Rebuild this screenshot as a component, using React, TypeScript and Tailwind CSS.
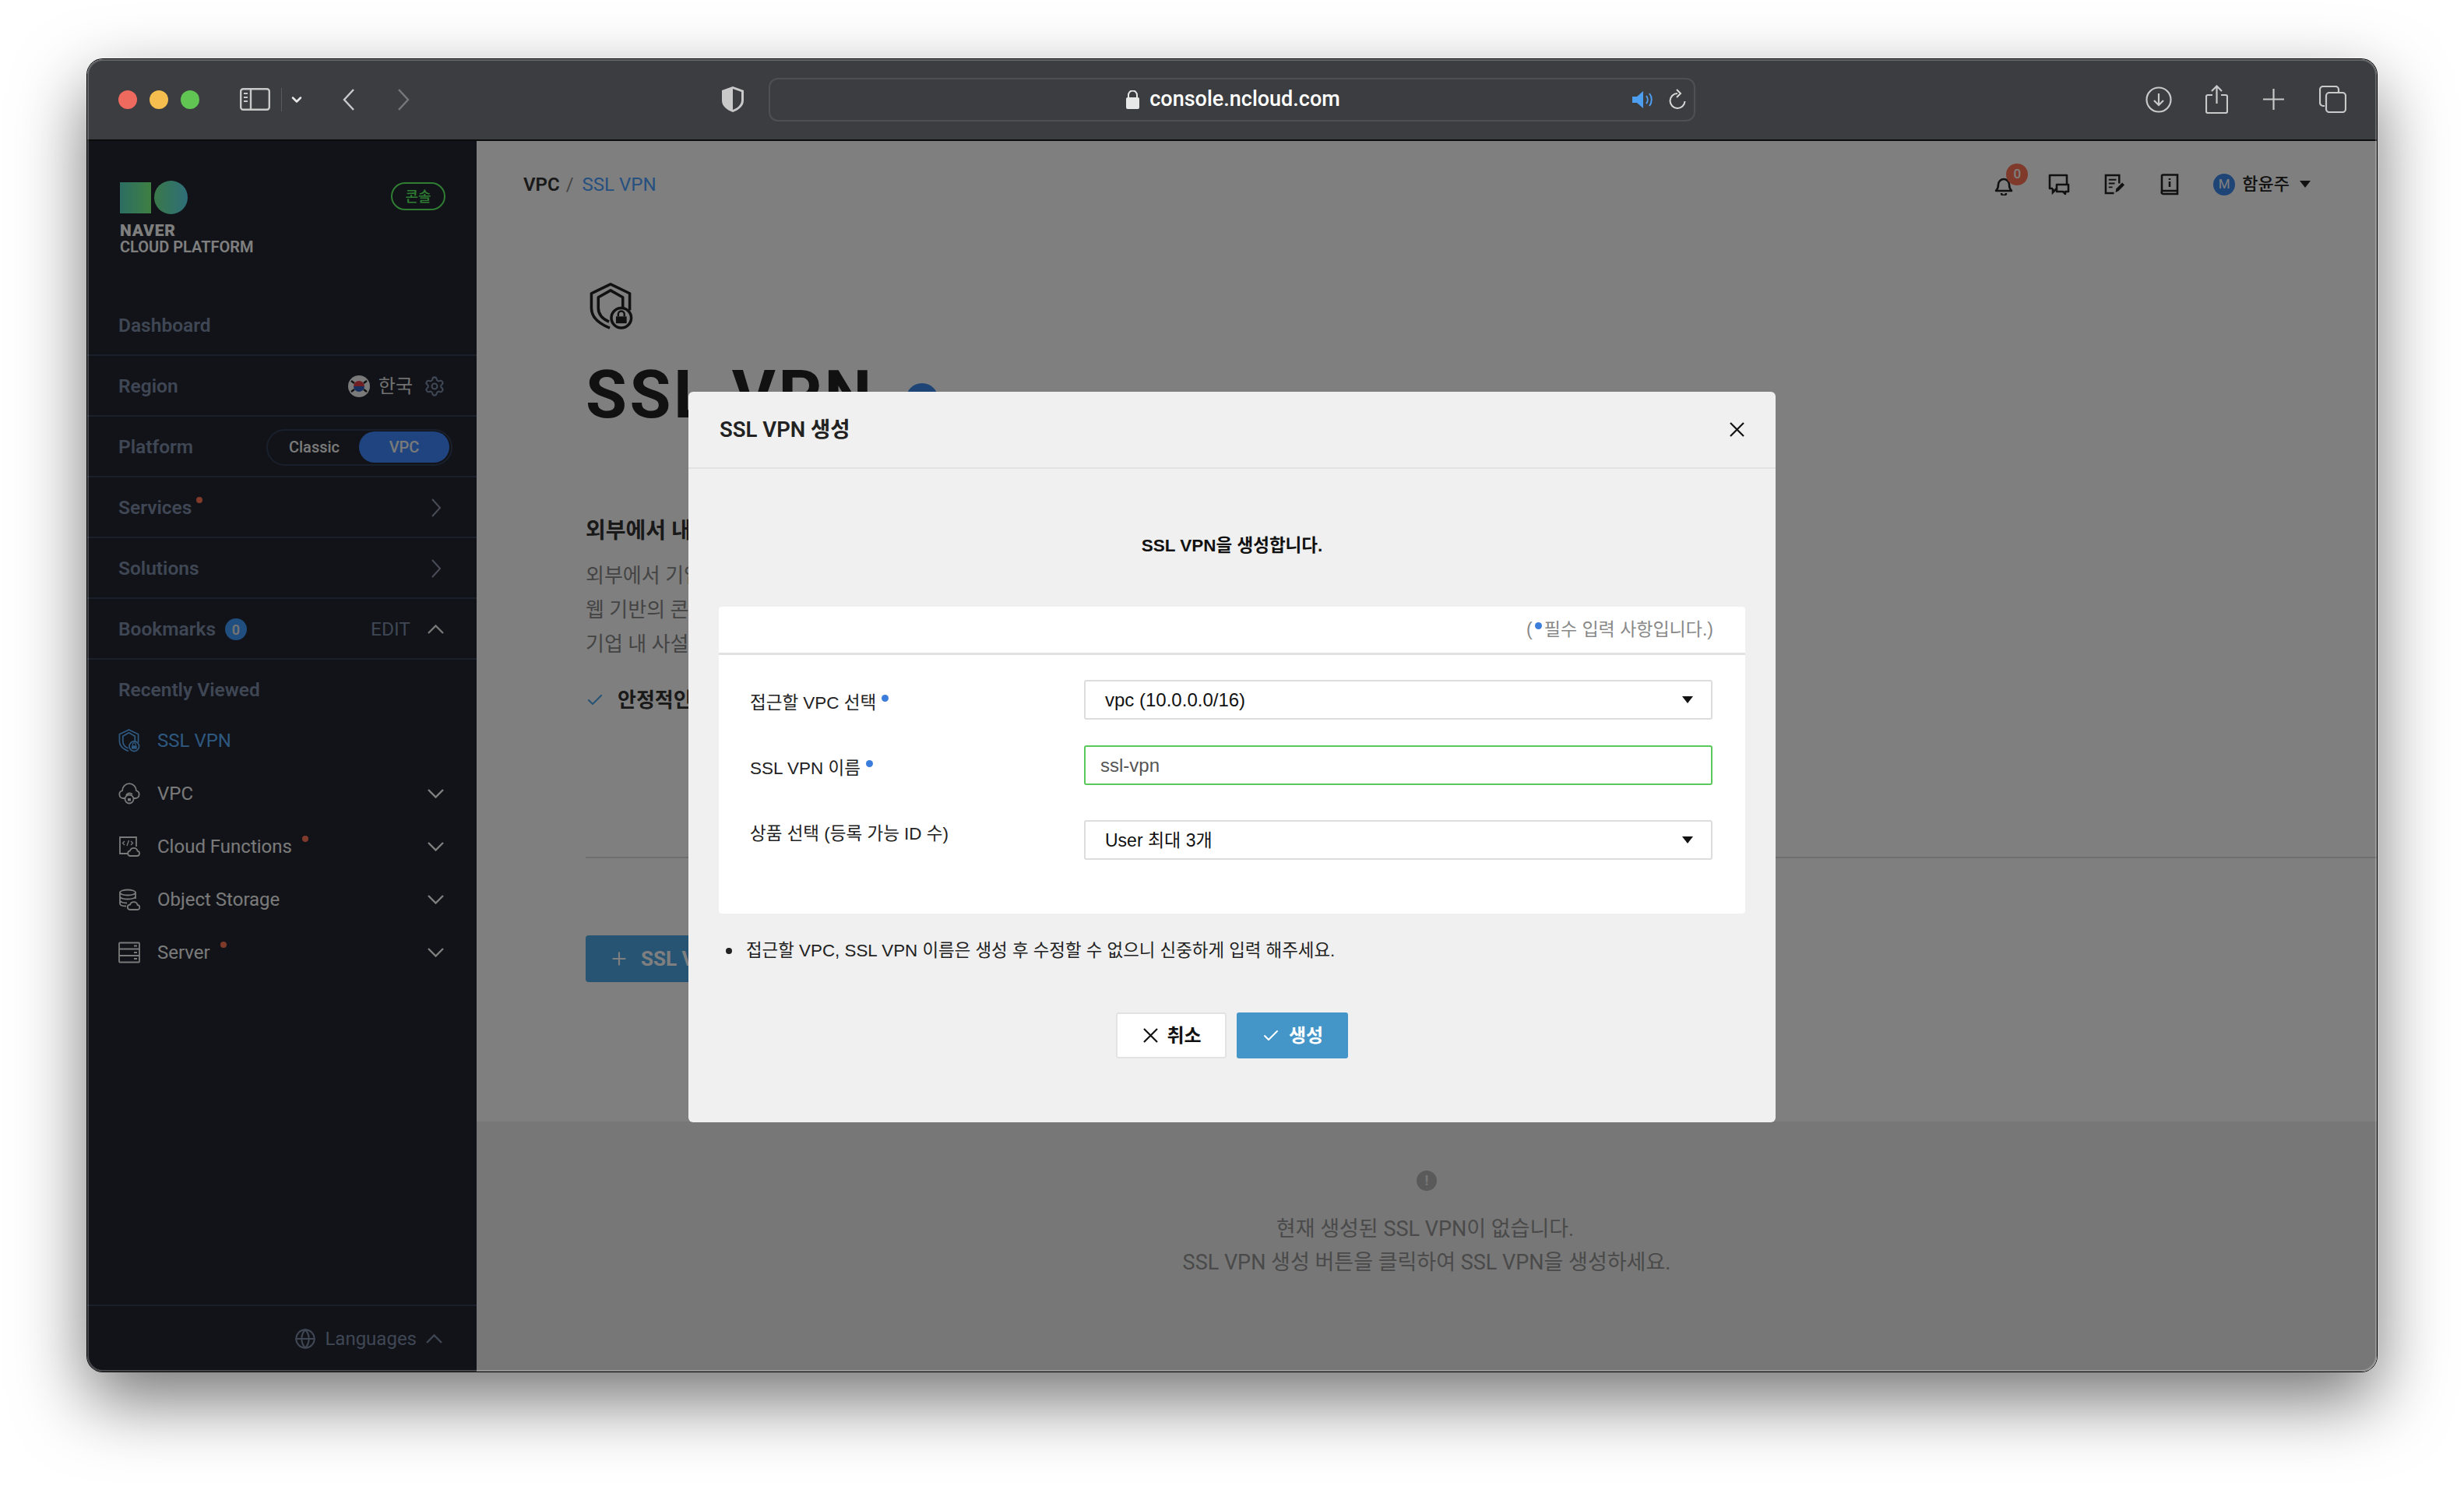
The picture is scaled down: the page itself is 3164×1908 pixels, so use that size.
import React from 'react';
import { Check, ChevronDown, Globe, Plus, Settings } from 'lucide-react';

const FONT = "font-['Roboto','Noto_Sans_CJK_KR',sans-serif]";
const FORM_FONT = "font-['Liberation_Sans','Noto_Sans_CJK_KR',sans-serif]";

const Caret = ({ className = '' }: { className?: string }) => (
  <svg viewBox="0 0 14 9" className={className}>
    <path d="M0 0h14L7 9z" fill="currentColor" />
  </svg>
);

const ChevDown = ({ className = '' }: { className?: string }) => (
  <svg viewBox="0 0 21 12" fill="none" stroke="currentColor" strokeWidth="2.4" className={`h-[12px] w-[21px] ${className}`}>
    <path d="M1 1l9.5 9.5L20 1" />
  </svg>
);

const ChevUp = ({ className = '' }: { className?: string }) => (
  <svg viewBox="0 0 21 12" fill="none" stroke="currentColor" strokeWidth="2.4" className={`h-[12px] w-[21px] ${className}`}>
    <path d="M1 11l9.5-9.5L20 11" />
  </svg>
);

const ChevRight = ({ className = '' }: { className?: string }) => (
  <svg viewBox="0 0 12 24" fill="none" stroke="currentColor" strokeWidth="2" className={`h-[24px] w-[12px] ${className}`}>
    <path d="M1 1l10 11L1 23" />
  </svg>
);

const CloseX = ({ className = '' }: { className?: string }) => (
  <svg viewBox="0 0 19 19" fill="none" stroke="currentColor" strokeWidth="2.2" className={`h-[19px] w-[19px] ${className}`}>
    <path d="M1 1l17 17M18 1L1 18" />
  </svg>
);

const ShieldLock = ({ className = '', bg = '#ffffff' }: { className?: string; bg?: string }) => (
  <svg viewBox="0 0 56 62" fill="none" stroke="currentColor" strokeWidth="3.6" className={className}>
    <path d="M52 36V14L27 2 2 14v19c0 11 9 20 24 26" strokeLinejoin="round" />
    <path d="M43 34V19L27 10 11 19v14c0 8 5 14 14 18" strokeLinejoin="round" />
    <circle cx="41" cy="46" r="13" fill={bg} />
    <path d="M34 44h14v9H34z" fill="currentColor" stroke="none" />
    <path d="M37 44v-3a4 4 0 0 1 8 0v3" strokeWidth="2.5" />
  </svg>
);

const CloudLock = ({ className = '' }: { className?: string }) => (
  <svg viewBox="0 0 28 28" fill="none" stroke="currentColor" strokeWidth="1.8" className={className}>
    <path d="M8 20H6a5 5 0 0 1-1-9.8 9 9 0 0 1 18 0A5 5 0 0 1 22 20h-2" />
    <path d="M10 16a5 5 0 0 1 8-1" />
    <circle cx="14" cy="21" r="5.5" />
    <path d="M12 20h4v3.5h-4z" fill="currentColor" stroke="none" />
  </svg>
);

const CodeCloud = ({ className = '' }: { className?: string }) => (
  <svg viewBox="0 0 28 28" fill="none" stroke="currentColor" strokeWidth="1.8" className={className}>
    <path d="M12 23H2V2h21v12" />
    <path d="M8 7l-2.5 2.5L8 12M16 7l2.5 2.5L16 12M13.5 6l-2.5 7" strokeWidth="1.3" />
    <path d="M15 26h9a3.2 3.2 0 0 0 .6-6.3 5 5 0 0 0-9.6-.4 3.4 3.4 0 0 0 0 6.7z" fill="#222630" />
  </svg>
);

const DbCloud = ({ className = '' }: { className?: string }) => (
  <svg viewBox="0 0 28 28" fill="none" stroke="currentColor" strokeWidth="1.8" className={className}>
    <ellipse cx="12" cy="5" rx="10" ry="3.5" />
    <path d="M2 5v14c0 2 3 3.5 8 3.5M22 5v8M2 10c0 2 4 3.5 10 3.5S22 12 22 10M2 15c0 2 4 3.5 9 3.5" />
    <path d="M15 27h9a3 3 0 0 0 .6-6 5 5 0 0 0-9.6-.4 3.2 3.2 0 0 0 0 6.4z" fill="#222630" />
  </svg>
);

const ServerIcon = ({ className = '' }: { className?: string }) => (
  <svg viewBox="0 0 28 28" fill="none" stroke="currentColor" strokeWidth="1.8" className={className}>
    <rect x="1" y="1.5" width="26" height="25" rx="1" />
    <path d="M1 9.5h26M1 18h26" />
    <path d="M20 5.5h4M20 14h4M20 22h4" strokeWidth="2.2" />
  </svg>
);

const Flag = () => (
  <svg viewBox="0 0 28 28" className="h-[28px] w-[28px]">
    <circle cx="14" cy="14" r="14" fill="#f4f4f4" />
    <path d="M7 14a7 7 0 0 1 14 0z" fill="#e0404a" />
    <path d="M7 14a7 7 0 0 0 14 0z" fill="#3060c0" />
    <path d="M4 7l4 3M24 7l-4 3M4 21l4-3M24 21l-4-3" stroke="#222" strokeWidth="2.4" />
  </svg>
);

const Dot = ({ className = '' }: { className?: string }) => (
  <span className={`h-[8px] w-[8px] -translate-y-[10px] rounded-full bg-[#ff7454] ${className}`} />
);

const SideRow = ({ children }: { children: React.ReactNode }) => (
  <div className="flex h-[78px] items-center justify-between border-b-2 border-[#343f58] pl-[40px] pr-[40px] pt-[2px] text-[24.5px] font-semibold text-[#7e8ca8]">
    {children}
  </div>
);

const RecentItem = ({
  icon,
  label,
  dot,
  active,
}: {
  icon: React.ReactNode;
  label: string;
  dot?: boolean;
  active?: boolean;
}) => (
  <div className={`flex h-[68px] items-center pl-[40px] pr-[42px] text-[24px] ${active ? 'text-[#5fb0ff]' : 'text-[#f4f4f4]'}`}>
    <span className="flex w-[50px]">{icon}</span>
    <span>{label}</span>
    {dot && <Dot className="ml-[13px]" />}
    {!active && <ChevDown className="ml-auto text-white" />}
  </div>
);

const Sidebar = () => (
  <aside className="flex w-[500px] shrink-0 flex-col bg-[#222630]">
    <div className="h-[198px] pl-[42px] pr-[40px] pt-[51px]">
      <div className="flex items-start justify-between">
        <div className="flex items-center gap-[4px]">
          <span className="h-[40px] w-[40px] bg-gradient-to-r from-[#58dcc4] to-[#7eff84]" />
          <span className="h-[43px] w-[43px] rounded-full bg-gradient-to-r from-[#74f090] to-[#5edcf0]" />
        </div>
        <span className="mt-[2px] flex h-[36px] w-[70px] items-center justify-center rounded-full border-2 border-[#5cfa64] text-[18px] font-medium text-[#5cfa64]">
          콘솔
        </span>
      </div>
      <div className="mt-[11px] text-[21px] font-black leading-[21px] tracking-[0.8px] text-white">NAVER</div>
      <div className="text-[20px] font-semibold leading-[21px] text-white">CLOUD PLATFORM</div>
    </div>
    <SideRow>Dashboard</SideRow>
    <SideRow>
      <span>Region</span>
      <span className="flex items-center text-[24px] font-normal text-[#e0e0e0]">
        <Flag />
        <span className="ml-[11px]">한국</span>
        <Settings className="ml-[14px] h-[28px] w-[28px] text-[#7e8ca8]" strokeWidth={1.8} />
      </span>
    </SideRow>
    <SideRow>
      <span>Platform</span>
      <span className="-mr-[9px] flex h-[47px] w-[239px] items-center rounded-full border-2 border-[#343f58] p-[2px] text-[20px] font-medium text-[#f4f4f4]">
        <span className="flex-1 text-center">Classic</span>
        <span className="flex h-[40px] w-[116px] items-center justify-center rounded-full bg-[#3e88ff]">VPC</span>
      </span>
    </SideRow>
    <SideRow>
      <span className="flex items-center">
        Services
        <Dot className="ml-[6px]" />
      </span>
      <ChevRight className="mr-[6px] text-[#8e98ac]" />
    </SideRow>
    <SideRow>
      <span>Solutions</span>
      <ChevRight className="mr-[6px] text-[#8e98ac]" />
    </SideRow>
    <SideRow>
      <span className="flex items-center">
        Bookmarks
        <span className="ml-[12px] flex h-[28px] w-[28px] items-center justify-center rounded-full bg-[#3e9cff] text-[18px] text-[#e8e8e8]">0</span>
      </span>
      <span className="flex items-center font-normal">
        <span>EDIT</span>
        <ChevUp className="ml-[22px] mr-[2px] text-[#f0f0f0]" />
      </span>
    </SideRow>
    <div className="flex h-[70px] items-center pl-[40px] pt-[8px] text-[24.5px] font-semibold text-[#7e8ca8]">Recently Viewed</div>
    <RecentItem active label="SSL VPN" icon={<ShieldLock bg="#222630" className="h-[30px] w-[28px]" />} />
    <RecentItem label="VPC" icon={<CloudLock className="h-[28px] w-[28px]" />} />
    <RecentItem label="Cloud Functions" dot icon={<CodeCloud className="h-[28px] w-[28px]" />} />
    <RecentItem label="Object Storage" icon={<DbCloud className="h-[28px] w-[28px]" />} />
    <RecentItem label="Server" dot icon={<ServerIcon className="h-[28px] w-[28px]" />} />
    <div className="mt-auto flex h-[86px] items-center justify-end border-t-2 border-[#343f58] pr-[44px] text-[24px] text-[#7e8ca8]">
      <Globe className="h-[28px] w-[28px]" strokeWidth={1.8} />
      <span className="ml-[11px]">Languages</span>
      <ChevUp className="ml-[12px]" />
    </div>
  </aside>
);

const TopIcons = () => (
  <div className="flex items-center text-[#222]">
    <span className="relative">
      <svg viewBox="0 0 24 28" fill="none" stroke="currentColor" strokeWidth="2.6" className="h-[28px] w-[24px]">
        <path d="M2 22c2-2 3-4 3-8a7 7 0 0 1 14 0c0 4 1 6 3 8z" strokeLinejoin="round" />
        <path d="M9 25a3 3 0 0 0 6 0" />
      </svg>
      <span className="absolute -right-[19px] -top-[13px] flex h-[28px] w-[28px] items-center justify-center rounded-full bg-[#ff7458] text-[17px] font-medium text-[#ffffff]">0</span>
    </span>
    <svg viewBox="0 0 28 28" fill="none" stroke="currentColor" strokeWidth="2.6" className="ml-[45px] h-[28px] w-[28px]">
      <path d="M6 19H2V2h22v11" strokeLinejoin="round" />
      <path d="M6 19v5l5-5" />
      <path d="M11 14h15v9h-4v3l-3-3h-8z" strokeLinejoin="round" />
    </svg>
    <svg viewBox="0 0 28 28" fill="none" stroke="currentColor" strokeWidth="2.6" className="ml-[44px] h-[27px] w-[27px]">
      <path d="M13 26H2V2h18v11" />
      <path d="M6 8h10M6 13h8M6 18h5" strokeWidth="2" />
      <path d="M15 25l1-5 8-8 3 3-8 8z" fill="currentColor" stroke="none" />
    </svg>
    <svg viewBox="0 0 24 28" fill="none" stroke="currentColor" strokeWidth="2.6" className="ml-[45px] h-[28px] w-[24px]">
      <path d="M2 23V3a1.5 1.5 0 0 1 1.5-1.5H22V26H4a2 2 0 0 1-2-3 2 2 0 0 1 2-1h18" />
      <path d="M12 6v2M12 10v7" strokeWidth="2.6" />
    </svg>
    <span className="ml-[44px] flex h-[28px] w-[28px] items-center justify-center rounded-full bg-[#3e8aee] text-[17px] text-[#ffffff]">M</span>
    <span className="ml-[9px] text-[22px] font-medium">함윤주</span>
    <Caret className="ml-[13px] h-[9px] w-[14px]" />
  </div>
);

const Main = () => (
  <main className="flex min-w-0 flex-1 flex-col bg-white">
    <div className="flex h-[111px] shrink-0 items-center justify-between pl-[60px] pr-[85px]">
      <div className="flex items-center text-[24px]">
        <span className="font-semibold text-[#333]">VPC</span>
        <span className="ml-[8px] text-[#888]">/</span>
        <span className="ml-[11px] text-[#4ca0ff]">SSL VPN</span>
      </div>
      <TopIcons />
    </div>
    <div className="pl-[140px]">
      <ShieldLock className="ml-[5px] mt-[71px] h-[61px] w-[56px] text-[#222]" />
      <div className="mt-[33px] flex h-[100px] items-center">
        <h1 className="text-[86px] font-bold leading-[100px] tracking-[3.5px] text-[#222]">SSL VPN</h1>
        <span className="ml-[40px] mt-[12px] h-[42px] w-[42px] rounded-full bg-[#3e8aee]" />
      </div>
      <h2 className="mt-[105px] text-[28px] font-bold leading-[40px] text-[#333]">외부에서 내부 네트워크로 안전하게 접속</h2>
      <div className="mt-[15px] text-[26px] leading-[44px] text-[#888]">
        <p>외부에서 기업 내부 서버에 안전하게 접속합니다</p>
        <p>웹 기반의 콘솔에서 쉽게 구성합니다</p>
        <p>기업 내 사설망을 보호합니다</p>
      </div>
      <div className="mt-[30px] flex h-[40px] items-center gap-[17px]">
        <Check className="h-[24px] w-[24px] text-[#50a8e8]" strokeWidth={2.2} />
        <span className="text-[26px] font-bold text-[#333]">안정적인 연결</span>
      </div>
    </div>
    <div className="ml-[140px] mt-[181px] h-[2px] bg-[#dcdcdc]" />
    <div className="ml-[140px] mt-[99px] flex h-[60px] w-[300px] items-center rounded-[4px] bg-[#50a8e8] pl-[30px] text-[26px] font-bold text-white">
      <Plus className="h-[26px] w-[26px]" strokeWidth={2} />
      <span className="ml-[15px]">SSL VPN 생성</span>
    </div>
    <div className="mt-[179px] flex flex-1 flex-col items-center bg-[#eeeeee] pt-[63px] text-[27px] leading-[43px] text-[#949494]">
      <span className="flex h-[26px] w-[26px] items-center justify-center rounded-full bg-[#b4b4b4] text-[18px] font-bold leading-none text-[#eee]">!</span>
      <p className="mt-[28px] -translate-x-[2px]">현재 생성된 SSL VPN이 없습니다.</p>
      <p>SSL VPN 생성 버튼을 클릭하여 SSL VPN을 생성하세요.</p>
    </div>
  </main>
);

const Req = () => <span className="ml-[7px] inline-block h-[9px] w-[9px] -translate-y-[9px] rounded-full bg-[#3b7ddb]" />;

const SelectBox = ({ children, size }: { children: React.ReactNode; size: string }) => (
  <div className={`flex h-[51px] w-[807px] items-center justify-between rounded-[3px] border-2 border-[#dddddd] bg-white pl-[25px] pr-[23px] text-[#111] ${size}`}>
    <span>{children}</span>
    <Caret className="h-[9px] w-[14px]" />
  </div>
);

const Modal = () => (
  <div className={`flex h-[938px] w-[1396px] flex-col rounded-[6px] bg-[#f0f0f0] ${FORM_FONT}`}>
    <div className="flex h-[99px] shrink-0 items-center justify-between border-b-2 border-[#e2e2e2] px-[40px]">
      <h3 className={`text-[27.5px] font-semibold text-[#222] ${FONT}`}>SSL VPN 생성</h3>
      <CloseX className="text-[#111]" />
    </div>
    <div className="flex-1 px-[39px]">
      <p className="flex h-[177px] items-center justify-center pt-[20px] text-[22.5px] font-bold text-[#111]">SSL VPN을 생성합니다.</p>
      <div className="h-[394px] rounded-[4px] bg-white">
        <div className="flex h-[62px] items-center justify-end border-b-[3px] border-[#e2e2e2] pr-[41px] text-[23px] text-[#888]">
          (<span className="mx-[3px] h-[9px] w-[9px] -translate-y-[5px] rounded-full bg-[#3b7ddb]" />필수 입력 사항입니다.)
        </div>
        <div className="flex flex-col pt-[32px] text-[22.5px] leading-[30px] text-[#222]">
          <div className="flex">
            <label className="w-[469px] pl-[40px] pt-[15px]">접근할 VPC 선택<Req /></label>
            <SelectBox size="text-[24px]">vpc (10.0.0.0/16)</SelectBox>
          </div>
          <div className="mt-[33px] flex">
            <label className="w-[469px] pl-[40px] pt-[15px]">SSL VPN 이름<Req /></label>
            <input
              readOnly
              value="ssl-vpn"
              className="h-[51px] w-[807px] rounded-[3px] border-2 border-[#5ac85a] bg-white pl-[19px] text-[24px] text-[#555] outline-none"
            />
          </div>
          <div className="mt-[45px] flex">
            <label className="w-[469px] pl-[40px] pt-[3px]">상품 선택 (등록 가능 ID 수)</label>
            <SelectBox size="text-[23px]">User 최대 3개</SelectBox>
          </div>
        </div>
      </div>
      <div className="mt-[33px] flex h-[30px] items-center pl-[9px] text-[22.4px] text-[#222]">
        <span className="h-[8px] w-[8px] rounded-full bg-[#222]" />
        <span className="ml-[18px]">접근할 VPC, SSL VPN 이름은 생성 후 수정할 수 없으니 신중하게 입력 해주세요.</span>
      </div>
      <div className="mt-[64px] flex justify-center gap-[13px] text-[24px] font-bold">
        <button className="flex h-[59px] w-[142px] items-center justify-center gap-[11px] rounded-[3px] border-2 border-[#e2e2e2] bg-white pl-[3px] text-[#111]">
          <CloseX />
          취소
        </button>
        <button className="flex h-[59px] w-[143px] items-center justify-center gap-[11px] rounded-[3px] bg-[#4495c8] text-white">
          <Check className="h-[24px] w-[24px]" strokeWidth={2} />
          생성
        </button>
      </div>
    </div>
  </div>
);

const TitleBar = () => (
  <div className="flex h-[105px] shrink-0 items-center border-b-2 border-[#0c0c0c] bg-[#3c3d40] pl-[40px] text-[#c9c9c9]">
    <div className="flex gap-[16px]">
      <span className="h-[24px] w-[24px] rounded-full bg-[#ee6a5f]" />
      <span className="h-[24px] w-[24px] rounded-full bg-[#f5be4f]" />
      <span className="h-[24px] w-[24px] rounded-full bg-[#61c554]" />
    </div>
    <svg viewBox="0 0 39 29" fill="none" stroke="currentColor" strokeWidth="2.4" className="ml-[52px] h-[29px] w-[39px]">
      <rect x="1.2" y="1.2" width="36.6" height="26.6" rx="3" />
      <path d="M14 1v27" />
      <path d="M5 7h5M5 12h5M5 17h5" strokeWidth="2" />
    </svg>
    <span className="ml-[14px] h-[30px] w-[1px] bg-[#5a5a5c]" />
    <ChevronDown className="ml-[9px] h-[20px] w-[20px] text-[#e8e8e8]" strokeWidth={3} />
    <svg viewBox="0 0 15 28" fill="none" stroke="currentColor" strokeWidth="2.4" className="ml-[49px] h-[28px] w-[15px]">
      <path d="M14 1L2 14l12 13" />
    </svg>
    <svg viewBox="0 0 15 28" fill="none" stroke="#77787a" strokeWidth="2.4" className="ml-[56px] h-[28px] w-[15px]">
      <path d="M1 1l12 13L1 27" />
    </svg>
    <svg viewBox="0 0 28 33" className="ml-[401px] h-[33px] w-[28px]">
      <path d="M14 0l14 5v13c0 7-6 12-14 15C6 30 0 25 0 18V5z" fill="#c9c9c9" />
      <path d="M14 3l11 4v11c0 5-5 10-11 12z" fill="#3c3d40" />
    </svg>
    <div className="ml-[32px] grid h-[56px] w-[1190px] grid-cols-[1fr_auto_1fr] items-center rounded-[12px] border-2 border-[#4f5053] text-[27px] font-medium text-white">
      <span />
      <span className="flex items-center pl-[3px]">
        <svg viewBox="0 0 17 24" className="h-[24px] w-[17px]">
          <path d="M3 10V6a5.5 5.5 0 0 1 11 0v4" fill="none" stroke="#e8e8e8" strokeWidth="2" />
          <rect y="9" width="17" height="15" rx="2" fill="#e8e8e8" />
        </svg>
        <span className="ml-[13px] leading-none">console.ncloud.com</span>
      </span>
      <span className="flex items-center justify-end gap-[19px] pr-[10px]">
        <svg viewBox="0 0 28 22" className="h-[22px] w-[28px]">
          <path d="M0 7h6l8-7v22l-8-7H0z" fill="#4d9eee" />
          <path d="M18 6a8 8 0 0 1 0 10M22 3a13 13 0 0 1 0 16" fill="none" stroke="#4d9eee" strokeWidth="2" />
        </svg>
        <svg viewBox="0 0 22 28" fill="none" stroke="#d8d8d8" strokeWidth="2" className="h-[28px] w-[22px]">
          <path d="M11 6a9.5 9.5 0 1 0 9.5 10" />
          <path d="M10 1l5 5-5 5" />
        </svg>
      </span>
    </div>
    <svg viewBox="0 0 34 34" fill="none" stroke="currentColor" strokeWidth="2.2" className="ml-[578px] h-[34px] w-[34px]">
      <circle cx="17" cy="17" r="15.5" />
      <path d="M17 9v15M11 18l6 6 6-6" />
    </svg>
    <svg viewBox="0 0 29 37" fill="none" stroke="currentColor" strokeWidth="2.2" className="ml-[43px] h-[37px] w-[29px]">
      <path d="M9 13H3a2 2 0 0 0-2 2v19a2 2 0 0 0 2 2h23a2 2 0 0 0 2-2V15a2 2 0 0 0-2-2h-6" />
      <path d="M14.5 24V2M8 8l6.5-6.5L21 8" />
    </svg>
    <svg viewBox="0 0 27 27" fill="none" stroke="currentColor" strokeWidth="2.2" className="ml-[45px] h-[27px] w-[27px]">
      <path d="M13.5 0v27M0 13.5h27" />
    </svg>
    <svg viewBox="0 0 35 35" fill="none" stroke="currentColor" strokeWidth="2.2" className="ml-[45px] h-[35px] w-[35px]">
      <path d="M7 26H5a4 4 0 0 1-4-4V5a4 4 0 0 1 4-4h16a4 4 0 0 1 4 4v3" />
      <rect x="9" y="9" width="25" height="25" rx="4" />
    </svg>
  </div>
);

export default function App() {
  return (
    <div className={`h-[1908px] w-[3164px] overflow-hidden bg-white pl-[112px] pt-[76px] ${FONT}`}>
      <div className="relative flex h-[1685px] w-[2940px] flex-col rounded-[20px] shadow-[0_0_0_1px_#000,0_36px_90px_rgba(0,0,0,0.55)]">
        <div className="flex flex-1 flex-col overflow-hidden rounded-[20px]">
          <TitleBar />
          <div className="flex min-h-0 flex-1">
            <Sidebar />
            <Main />
          </div>
        </div>
        <div className="absolute inset-x-0 bottom-0 top-[105px] flex justify-center overflow-hidden rounded-b-[20px] bg-black/50 pt-[322px]">
          <Modal />
        </div>
        <div className="pointer-events-none absolute inset-0 rounded-[20px] shadow-[inset_0_0_0_2px_rgba(255,255,255,0.22)]" />
      </div>
    </div>
  );
}
